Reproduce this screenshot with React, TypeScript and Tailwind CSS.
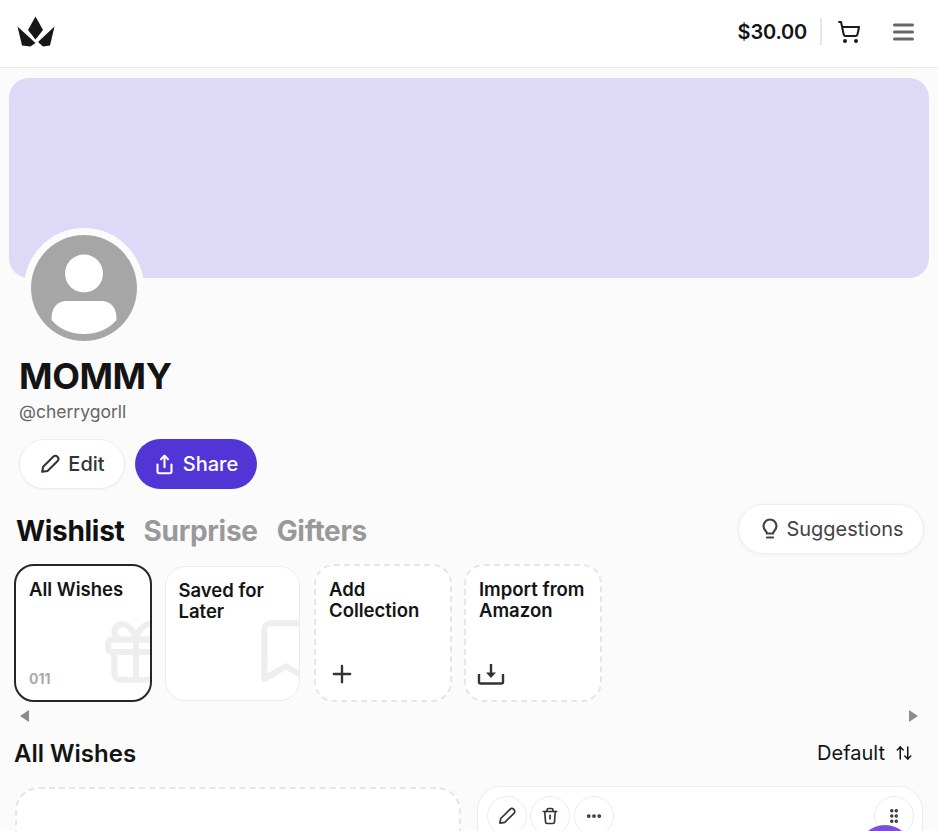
import { ArrowUpDown, Bookmark, Ellipsis, Gift, GripVertical, Plus, Share, ShoppingCart } from "lucide-react";

const PencilIcon = ({ size, strokeWidth = 2 }: { size: number; strokeWidth?: number }) => (
  <svg width={size} height={size} viewBox="0 0 24 24" fill="none" stroke="currentColor" strokeWidth={strokeWidth} strokeLinejoin="round">
    <path d="M3.5 20.5 L4.5 15 L15.5 4 a3.4 3.4 0 0 1 4.8 4.8 L9.3 19.6 Z" />
  </svg>
);

const CollectionCard = ({ title, dashed, children }: { title: string; dashed?: boolean; children?: React.ReactNode }) => (
  <div
    className={`relative h-[138px] w-[138px] shrink-0 overflow-hidden rounded-[20px] bg-white p-[13px] ${
      dashed ? "border-2 border-dashed border-[#e6e6e6]" : ""
    }`}
  >
    <div className="text-[18.5px] leading-[21px] font-semibold text-[#141414]">{title}</div>
    {children}
  </div>
);

const RoundButton = ({ children }: { children: React.ReactNode }) => (
  <div className="flex h-10 w-10 items-center justify-center rounded-full border border-[#ececec] bg-white text-[#333]">
    {children}
  </div>
);

export default function App() {
  return (
    <div className="relative h-[831px] overflow-hidden bg-[#fbfbfb] font-['Inter',sans-serif]">
      <header className="flex h-[68px] items-center justify-between border-b border-[#e9e9e9] bg-white pr-[24px] pb-[4px] pl-[17px]">
        <svg width="38" height="32" viewBox="0 0 38 32" className="fill-[#171717]">
          <path d="M18.5 0.5 L26 14 L18.5 23.5 L11 14 Z" />
          <path d="M0.5 10.5 L18.5 27 L13.5 30.5 L5 29.5 Z" />
          <path d="M37.5 10.5 L21 26 L26 30.5 L33 29.5 Z" />
        </svg>
        <div className="flex items-center">
          <span className="text-[20px] font-semibold tracking-[-0.2px] text-[#141414]">$30.00</span>
          <div className="mr-[15px] ml-[13px] h-[27px] w-0.5 bg-[#e6e6e6]" />
          <ShoppingCart size={24} strokeWidth={2} className="text-[#1a1a1a]" />
          <svg width="21" height="18" viewBox="0 0 21 18" className="ml-[32px] fill-[#666]">
            <rect x="0" y="0.5" width="21" height="3" rx="1.5" />
            <rect x="0" y="7.5" width="21" height="3" rx="1.5" />
            <rect x="0" y="14.5" width="21" height="3" rx="1.5" />
          </svg>
        </div>
      </header>

      <div className="mx-[9px] mt-[10px] h-[200px] rounded-[20px] bg-[#ded9f7]" />

      <div className="relative z-10 -mt-[50px] ml-6 h-[120px] w-[120px] rounded-full bg-[#fbfbfb] p-[7px]">
        <svg viewBox="0 0 106 106" className="h-[106px] w-[106px]">
          <circle cx="53" cy="53" r="53" fill="#a6a6a6" />
          <circle cx="53" cy="38.5" r="19" fill="#fff" />
          <path d="M36 66 H70 C80 66 86 73 85.5 85 C77 95 65 99 53 99 C41 99 29 95 20.5 85 C20 73 26 66 36 66 Z" fill="#fff" />
        </svg>
      </div>

      <div className="pl-[19px]">
        <h1 className="mt-[6px] text-[36px] leading-[44px] font-bold tracking-[-0.4px] text-[#141414]">MOMMY</h1>
        <p className="mt-[4px] text-[17.5px] leading-[20px] text-[#666]">@cherrygorll</p>
        <div className="mt-[17px] flex gap-[10px]">
          <button className="flex h-[50px] w-[106px] items-center justify-center gap-[7px] rounded-full border border-[#ededed] bg-white text-[20px] font-medium text-[#333] shadow-[0_1px_3px_rgba(0,0,0,0.04)]">
            <PencilIcon size={22} strokeWidth={2.2} />
            Edit
          </button>
          <button className="flex h-[50px] w-[122px] items-center justify-center gap-2 rounded-full bg-[#5235d5] text-[20px] font-medium text-white">
            <Share size={21} strokeWidth={2.4} />
            Share
          </button>
        </div>
      </div>

      <div className="mt-[15px] flex h-[50px] items-center justify-between pr-[14px] pl-[16px]">
        <div className="flex gap-[19px] pt-[3px] text-[28px] font-bold tracking-[-0.3px] text-[#999]">
          <span className="text-[#111]">Wishlist</span>
          <span>Surprise</span>
          <span>Gifters</span>
        </div>
        <button className="flex h-[50px] w-[186px] items-center justify-center gap-[6px] rounded-full border border-[#eee] bg-white pl-[2px] text-[20px] text-[#444] shadow-[0_1px_4px_rgba(0,0,0,0.05)]">
          <svg width="20" height="22" viewBox="0 0 20 22" fill="none" stroke="currentColor" strokeWidth="2.2" strokeLinecap="round">
            <path d="M7 15.5 C7 13.5 3.5 12 3.5 8 A6.5 6.5 0 0 1 16.5 8 C16.5 12 13 13.5 13 15.5 Z" />
            <path d="M7 19.5 H13" />
          </svg>
          Suggestions
        </button>
      </div>

      <div className="mt-[10px] flex gap-3 pl-[14px]">
        <div className="relative h-[138px] w-[138px] shrink-0 overflow-hidden rounded-[20px] border-2 border-[#262626] bg-white p-[13px]">
          <div className="text-[18.5px] leading-[21px] font-semibold text-[#141414]">All Wishes</div>
          <Gift size={74} strokeWidth={2} className="absolute top-[49px] left-[83px] text-[#eeeeee]" />
          <span className="absolute bottom-[11px] left-[13px] text-[14px] font-bold text-[#aaa]">011</span>
        </div>
        <div className="flex h-[138px] w-[138px] shrink-0 items-center justify-center">
          <div className="relative -ml-[2px] h-[135px] w-[135px] overflow-hidden rounded-[20px] border border-[#ececec] bg-white p-[13px]">
            <div className="text-[18.5px] leading-[21px] font-semibold text-[#141414]">Saved for Later</div>
            <Bookmark size={74} strokeWidth={2} className="absolute top-[47px] left-[83px] text-[#eeeeee]" />
          </div>
        </div>
        <CollectionCard title="Add Collection" dashed>
          <Plus size={28} strokeWidth={2} className="absolute bottom-[12px] left-[12px] text-[#333]" />
        </CollectionCard>
        <CollectionCard title="Import from Amazon" dashed>
          <svg width="28" height="22" viewBox="0 0 28 22" fill="none" className="absolute bottom-[15px] left-[11px] text-[#333]" stroke="currentColor" strokeWidth="2.4">
            <path d="M2 11 V19 A1.5 1.5 0 0 0 3.5 20.5 H24.5 A1.5 1.5 0 0 0 26 19 V11" />
            <path d="M14 1 V12" />
            <path d="M9 9.5 H19 L14 15 Z" fill="currentColor" stroke="none" />
          </svg>
        </CollectionCard>
      </div>

      <div className="mt-[8px] flex h-3 items-center justify-between pr-[20px] pl-[20px]">
        <svg width="9" height="12" viewBox="0 0 9 12" fill="#8c8c8c"><path d="M9 0 V12 L0 6 Z" /></svg>
        <svg width="9" height="12" viewBox="0 0 9 12" fill="#8c8c8c"><path d="M0 0 V12 L9 6 Z" /></svg>
      </div>

      <div className="mt-[17px] flex items-center justify-between pr-[25px] pl-[14px]">
        <h2 className="text-[24px] leading-[30px] font-semibold text-[#141414]">All Wishes</h2>
        <div className="-mt-[2px] flex items-center gap-[10px] text-[20px] text-[#141414]">
          Default
          <ArrowUpDown size={18} />
        </div>
      </div>

      <div className="mt-[18px] grid grid-cols-2 gap-4 pr-[15px] pl-[15px]">
        <div className="h-[200px] rounded-[24px] border-2 border-dashed border-[#e6e6e6] bg-white" />
        <div className="-mt-px flex h-[200px] items-start justify-between rounded-[24px] border border-[#ececec] bg-white pt-[9px] pr-[8px] pl-[9px]">
          <div className="flex gap-[3.4px]">
            <RoundButton><PencilIcon size={20} /></RoundButton>
            <RoundButton>
              <svg width="18" height="18" viewBox="0 0 24 24" fill="none" stroke="currentColor" strokeWidth="2.2" strokeLinecap="round" strokeLinejoin="round">
                <path d="M3 6h18" />
                <path d="M8 6V4a2 2 0 0 1 2-2h4a2 2 0 0 1 2 2v2" />
                <path d="M5 6l1 14a2 2 0 0 0 2 2h8a2 2 0 0 0 2-2l1-14" />
                <path d="M12 11v5" />
              </svg>
            </RoundButton>
            <RoundButton><Ellipsis size={18} strokeWidth={3} /></RoundButton>
          </div>
          <RoundButton><GripVertical size={18} strokeWidth={2.6} /></RoundButton>
        </div>
      </div>

      <div className="absolute top-[825px] left-[858px] h-[54px] w-[54px] rounded-full bg-[#7a4fd9]" />
    </div>
  );
}
